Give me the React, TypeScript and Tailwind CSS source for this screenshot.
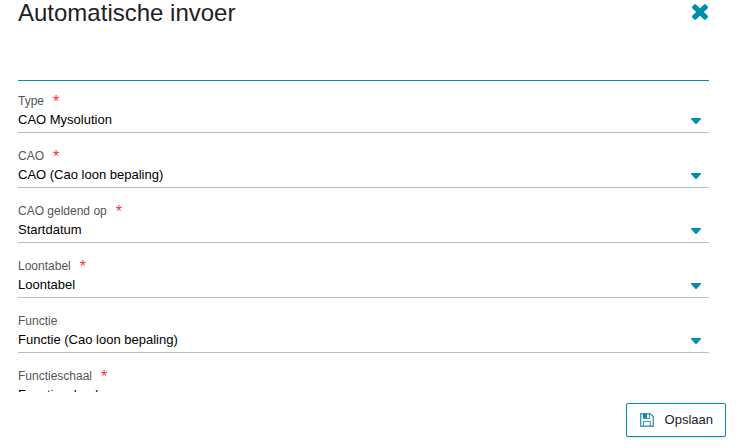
type Field = {
  id: string
  label: string
  value: string
  required?: boolean
}

const fields: Field[] = [
  { id: 'type', label: 'Type', value: 'CAO Mysolution', required: true },
  { id: 'cao', label: 'CAO', value: 'CAO (Cao loon bepaling)', required: true },
  { id: 'cao-geldend-op', label: 'CAO geldend op', value: 'Startdatum', required: true },
  { id: 'loontabel', label: 'Loontabel', value: 'Loontabel', required: true },
  { id: 'functie', label: 'Functie', value: 'Functie (Cao loon bepaling)' },
  { id: 'functieschaal', label: 'Functieschaal', value: 'Functieschaal', required: true },
]

function CloseIcon() {
  return (
    <svg aria-hidden="true" viewBox="0 0 18 18" className="h-[18px] w-[18px]">
      <path
        d="M5 1.400L9 5.200l4-3.800q.9-.7 1.800 0l2 2q.8.900 0 1.800L12.900 9l3.900 3.800q.8.900 0 1.800l-2 2q-.9.700-1.800 0L9 12.800l-4 3.800q-.9.700-1.800 0l-2-2q-.8-.9 0-1.800L5.100 9 1.200 5.200q-.8-.9 0-1.800l2-2q.9-.7 1.800 0z"
        fill="currentColor"
      />
    </svg>
  )
}

function SaveIcon() {
  return (
    <svg aria-hidden="true" viewBox="0 0 14 14" className="h-3.5 w-3.5" fill="none" stroke="#4a9ab5">
      <path d="M.7.7h9.600l3 3v9.600H.7z" strokeWidth="1.400" />
      <path d="M3.500 1v4.500h6V1M3.500 13V8.500h7V13" strokeWidth="1.200" />
      <path d="M3 1h4v4H3z" fill="#0090ad" stroke="none" />
    </svg>
  )
}

function SelectField({ id, label, value, required }: Field) {
  return (
    <div className="border-b border-[#bdbdbd] pb-0.5">
      <label htmlFor={id} className="flex h-[17px] items-start gap-[9px] text-xs leading-4 text-[#555]">
        {label}
        {required && <span className="text-base leading-[17px] text-[#ff2d3d]">*</span>}
      </label>
      <div className="relative">
        <select
          id={id}
          required={required}
          className="block h-5 w-full appearance-none bg-transparent text-[13px] leading-5 text-black outline-none"
        >
          <option>{value}</option>
        </select>
        <svg
          aria-hidden="true"
          viewBox="0 0 10 6"
          className="pointer-events-none absolute top-2 right-2 h-1.5 w-2.5 fill-[#0090ad]"
        >
          <path d="M0 0h10v1L5.500 6h-1L0 1z" />
        </svg>
      </div>
    </div>
  )
}

export default function App() {
  return (
    <form
      className="flex h-screen flex-col bg-white font-['Liberation_Sans',Arial,sans-serif]"
      onSubmit={(e) => e.preventDefault()}
    >
      <div className="min-h-0 flex-1 overflow-hidden pr-[29px] pl-[18px]">
        <header className="flex h-[81px] items-start justify-between border-b border-[#0090ad]">
          <h1 className="text-2xl leading-[26px] text-[#212121]">Automatische invoer</h1>
          <button type="button" aria-label="Sluiten" className="mt-[3px] text-[#0090ad]">
            <CloseIcon />
          </button>
        </header>

        <div className="flex flex-col gap-[15px] pt-3">
          {fields.map((field) => (
            <SelectField key={field.id} {...field} />
          ))}
        </div>
      </div>

      <footer className="flex justify-end px-3 py-[11px]">
        <button
          type="submit"
          className="flex h-[34px] items-center gap-[11px] rounded-xs border border-[#0090ad] bg-white pr-3 pl-[13px] text-[13px] text-[#212121] shadow-sm"
        >
          <SaveIcon />
          Opslaan
        </button>
      </footer>
    </form>
  )
}
